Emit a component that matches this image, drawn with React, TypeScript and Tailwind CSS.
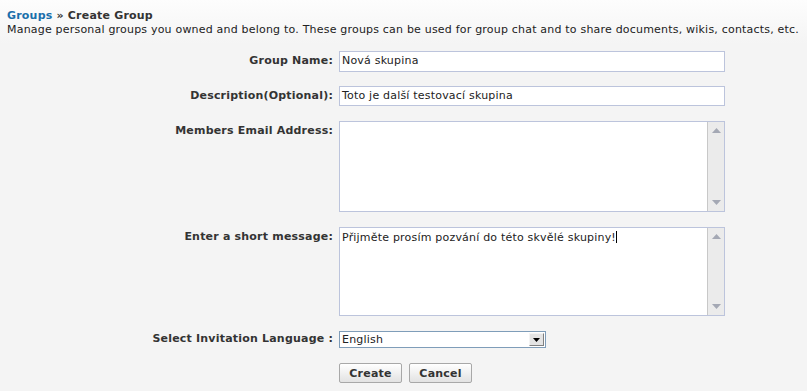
import React from "react";

const font = { fontFamily: 'Verdana, "DejaVu Sans", sans-serif', letterSpacing: "0.2px" };

function Scrollbar() {
  return (
    <div className="w-[17px] h-full bg-[#ebebeb] border-l border-[#c8c8c8] flex flex-col justify-between items-center py-[6px]">
      <svg width="9" height="5" viewBox="0 0 9 5"><path d="M0 5 L4.5 0 L9 5 Z" fill="#a4a8b4" /></svg>
      <svg width="9" height="5" viewBox="0 0 9 5"><path d="M0 0 L4.5 5 L9 0 Z" fill="#a4a8b4" /></svg>
    </div>
  );
}

function Label({ children, top }: { children: React.ReactNode; top?: boolean }) {
  return (
    <div className={`w-[339px] shrink-0 pr-[6px] text-right font-bold text-[#333] ${top ? "pt-[2px]" : "self-center"}`}>
      {children}
    </div>
  );
}

export default function App() {
  return (
    <div className="w-[807px] h-[391px] bg-[#f4f4f4] text-[11px] text-[#222] overflow-hidden" style={font}>
      <div className="h-[44px] bg-gradient-to-b from-[#fdfdfd] to-[#f4f4f4] px-[7px] pt-[9px] leading-[14px]">
        <div className="font-bold text-[#333]">
          <span className="text-[#1a6fab]">Groups</span> » Create Group
        </div>
        <div className="text-[#222]">
          Manage personal groups you owned and belong to. These groups can be used for group chat and to share documents, wikis, contacts, etc.
        </div>
      </div>

      <div className="flex flex-col pt-[7px]">
        <div className="flex h-[21px]">
          <Label>Group Name:</Label>
          <div className="w-[386px] h-[21px] bg-white border border-[#bcc4dc] px-[2px] flex items-center">Nová skupina</div>
        </div>
        <div className="flex h-[20px] mt-[14px]">
          <Label>Description(Optional):</Label>
          <div className="w-[386px] h-[20px] bg-white border border-[#bcc4dc] px-[2px] flex items-center">Toto je další testovací skupina</div>
        </div>
        <div className="flex mt-[15px]">
          <Label top>Members Email Address:</Label>
          <div className="w-[386px] h-[91px] bg-white border border-[#bcc4dc] flex">
            <div className="flex-1" />
            <Scrollbar />
          </div>
        </div>
        <div className="flex mt-[15px]">
          <Label top>Enter a short message:</Label>
          <div className="w-[386px] h-[89px] bg-white border border-[#bcc4dc] flex">
            <div className="flex-1 px-[2px] pt-[2px]">
              Přijměte prosím pozvání do této skvělé skupiny!<span className="inline-block w-px h-[12px] bg-black align-[-2px]" />
            </div>
            <Scrollbar />
          </div>
        </div>
        <div className="flex h-[17px] mt-[15px]">
          <Label>Select Invitation Language :</Label>
          <div className="w-[207px] h-[17px] bg-white border border-[#7f9db9] flex items-stretch">
            <div className="flex-1 pl-[2px] flex items-center leading-none">English</div>
            <div className="w-[15px] m-[1px] bg-[#e4e4e4] border border-[#f4f4f4] border-r-[#808080] border-b-[#808080] flex items-center justify-center">
              <svg width="7" height="4" viewBox="0 0 7 4"><path d="M0 0 L3.5 4 L7 0 Z" fill="#000" /></svg>
            </div>
          </div>
        </div>
        <div className="flex mt-[15px] pl-[339px] gap-[7px]">
          <button className="h-[20px] w-[63px] border border-[#a8a8a8] rounded-[2px] bg-gradient-to-b from-white to-[#e2e2e2] font-bold text-[#333] leading-none">Create</button>
          <button className="h-[20px] w-[63px] border border-[#a8a8a8] rounded-[2px] bg-gradient-to-b from-white to-[#e2e2e2] font-bold text-[#333] leading-none">Cancel</button>
        </div>
      </div>
    </div>
  );
}
